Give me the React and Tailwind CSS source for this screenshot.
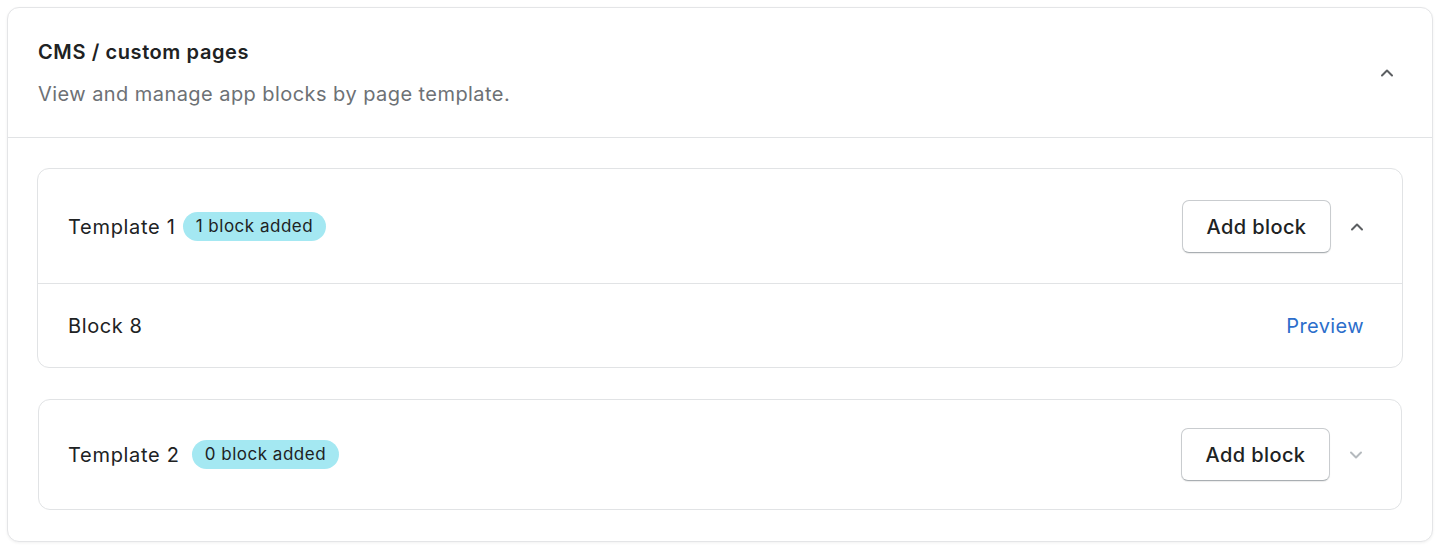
import React from "react";

// Small chevron used by the collapsible sections
const Chevron = ({ up = true, className = "" }) => (
  <svg
    className={className}
    width="14"
    height="10"
    viewBox="0 0 14 10"
    fill="none"
    stroke="currentColor"
    strokeWidth="2"
    strokeLinecap="round"
    strokeLinejoin="round"
  >
    {up ? <path d="M2 7.5l5-5 5 5" /> : <path d="M2 2.5l5 5 5-5" />}
  </svg>
);

const AddBlockButton = () => (
  <button className="h-[53px] w-[149px] rounded-[7px] border border-[#c9cccf] border-b-[#a9aeb2] bg-white text-[20px] font-medium tracking-[0.02em] text-[#202223] shadow-[0_1px_1px_rgba(0,0,0,0.08)]">
    Add block
  </button>
);

const Badge = ({ children, className = "" }) => (
  <span
    className={`inline-flex h-[29px] items-center rounded-full bg-[#a4e8f2] px-[13px] text-[17px] tracking-[0.03em] text-[#202223] ${className}`}
  >
    {children}
  </span>
);

const TemplateCard = ({ name, count, open = false, blocks = [], badgeGap, headPad }) => (
  <div className="rounded-[12px] border border-[#e1e3e5] bg-white">
    <div className={`flex items-center justify-between pr-[38px] ${headPad}`}>
      <div className="flex items-center">
        <span className="text-[20px] tracking-[0.035em] text-[#202223]">{name}</span>
        <Badge className={badgeGap}>{count} block added</Badge>
      </div>
      <div className="flex items-center gap-[19px]">
        <AddBlockButton />
        <Chevron
          up={open}
          className={open ? "text-[#5c5f62]" : "text-[#b5babe]"}
        />
      </div>
    </div>
    {open &&
      blocks.map((b) => (
        <div
          key={b}
          className="flex h-[84px] items-center justify-between border-t border-[#e1e3e5] pl-[30px] pr-[38px]"
        >
          <span className="text-[20px] tracking-[0.03em] text-[#202223]">{b}</span>
          <a className="cursor-pointer text-[20px] tracking-[0.02em] text-[#2c6ecb]">Preview</a>
        </div>
      ))}
  </div>
);

export default function App() {
  return (
    <div
      className="min-h-screen bg-white pl-[7px] pt-[7px]"
      style={{ fontFamily: "Inter, 'Noto Sans', sans-serif" }}
    >
      <div className="w-[1426px] rounded-[12px] border border-[#e4e5e7] bg-white shadow-[0_1px_3px_rgba(0,0,0,0.06)]">
        <div className="flex items-center justify-between border-b border-[#e1e3e5] pb-[29px] pl-[30px] pr-[38px] pt-[30px]">
          <div className="flex flex-col gap-[14px]">
            <h2 className="text-[20px] leading-[28px] font-semibold tracking-[0.03em] text-[#202223]">
              CMS / custom pages
            </h2>
            <p className="text-[20px] leading-[28px] tracking-[0.022em] text-[#6d7175]">
              View and manage app blocks by page template.
            </p>
          </div>
          <Chevron up className="text-[#5c5f62]" />
        </div>
        <div className="flex flex-col gap-[31px] px-[29px] pb-[31px] pt-[30px]">
          <TemplateCard
            name="Template 1"
            count={1}
            open
            blocks={["Block 8"]}
            badgeGap="ml-[7px]"
            headPad="pl-[30px] pt-[31px] pb-[30px]"
          />
          <div className="px-px">
            <TemplateCard
              name="Template 2"
              count={0}
              badgeGap="ml-[12px]"
              headPad="pl-[29px] pt-[28px] pb-[28px]"
            />
          </div>
        </div>
      </div>
    </div>
  );
}
